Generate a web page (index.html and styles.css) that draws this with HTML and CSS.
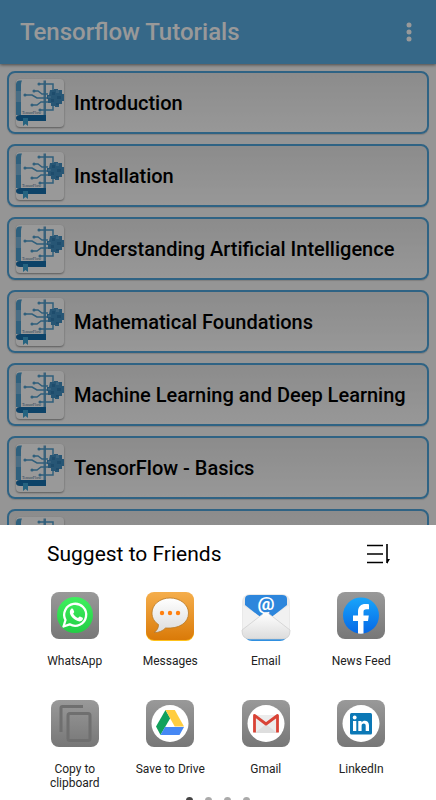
FILE: index.html
```
<!DOCTYPE html>
<html lang="en">
<head>
  <meta charset="UTF-8">
  <meta name="viewport" content="width=device-width, initial-scale=1">
  <title>Tensorflow Tutorials</title>
  <link rel="stylesheet" href="styles.css">
</head>
<body>

<!-- shared book icon, used by every chapter row -->
<svg class="defs" width="0" height="0" aria-hidden="true">
  <symbol id="book" viewBox="0 0 48 48">
    <path d="M5 2h24v34H5z" fill="#fff"/>
    <path d="M4 1.500h2Q5 3 5 6v30H0V5.500q0-4 4-4z" fill="#4fa0d0"/>
    <path d="M0 12h5v11H0z" fill="#7ab6dc"/>
    <path d="M4 36h26v6H4q-4 0-4-3t4-3z" fill="#1670ad"/>
    <path d="M7 39h5v8l-2.500-2L7 47z" fill="#3fa6d6"/>
    <path d="M27.500 1.500H30V36h-2.500z" fill="#62a3cd"/>
    <g fill="none" stroke="#509fce" stroke-width="1.500">
      <path d="M24 5h13v7M18 12h4l4 3h6M10 16h6l5 3h12M17 26h4l4-3h8M25 31h12v-5"/>
      <circle cx="23" cy="5" r=".8"/><circle cx="18" cy="12" r=".8"/><circle cx="9" cy="16" r=".8"/><circle cx="16" cy="26" r=".8"/><circle cx="24" cy="31" r=".8"/>
    </g>
    <path d="M34 11h4v-1h4v1h4v4h2v7h-2v3h-3v3h-4v-1h-4v-3h-3v-4h-1v-4h2z" fill="#4290c4"/>
    <path d="M36 13h3v3h-3zM41 17h4v3h-4zM35 20h3v3h-3zM40 24h3v2h-3z" fill="#327fb5"/>
    <path d="M40 11h3v3h-3zM32 17h3v2h-3z" fill="#5fa6d4"/>
  </symbol>
  <linearGradient id="tile" x2="0" y2="1"><stop stop-color="#999"/><stop offset="1" stop-color="#777"/></linearGradient>
  <linearGradient id="green" x2="0" y2="1"><stop stop-color="#3ff05e"/><stop offset="1" stop-color="#23cd45"/></linearGradient>
  <linearGradient id="orange" x2="0" y2="1"><stop stop-color="#f5ae4c"/><stop offset="1" stop-color="#da7a08"/></linearGradient>
  <linearGradient id="blue" x2="0" y2="1"><stop stop-color="#18a5fb"/><stop offset="1" stop-color="#0668e6"/></linearGradient>
  <linearGradient id="paper" x2="0" y2="1"><stop stop-color="#fff"/><stop offset="1" stop-color="#dcdcdc"/></linearGradient>
</svg>

<div class="app">
  <header class="topbar">
    <h1>Tensorflow Tutorials</h1>
    <button class="more" aria-label="More options">
      <svg width="6" height="20" viewBox="0 0 6 20"><circle cx="3" cy="3" r="2.500"/><circle cx="3" cy="10" r="2.500"/><circle cx="3" cy="17" r="2.500"/></svg>
    </button>
  </header>

  <nav class="chapters">
    <a class="chapter" href="#"><svg class="book"><use href="#book"/><text x="6" y="35">TensorFlow</text></svg>Introduction</a>
    <a class="chapter" href="#"><svg class="book"><use href="#book"/><text x="6" y="35">TensorFlow</text></svg>Installation</a>
    <a class="chapter" href="#"><svg class="book"><use href="#book"/><text x="6" y="35">TensorFlow</text></svg>Understanding Artificial Intelligence</a>
    <a class="chapter" href="#"><svg class="book"><use href="#book"/><text x="6" y="35">TensorFlow</text></svg>Mathematical Foundations</a>
    <a class="chapter" href="#"><svg class="book"><use href="#book"/><text x="6" y="35">TensorFlow</text></svg>Machine Learning and Deep Learning</a>
    <a class="chapter" href="#"><svg class="book"><use href="#book"/><text x="6" y="35">TensorFlow</text></svg>TensorFlow - Basics</a>
    <a class="chapter" href="#" aria-label="Next chapter"><svg class="book"><use href="#book"/></svg></a>
  </nav>
  <div class="scrim"></div>
</div>

<section class="sheet">
  <div class="sheet-head">
    <h2>Suggest to Friends</h2>
    <button class="sort" aria-label="Sort">
      <svg width="24" height="22" viewBox="0 0 24 22" fill="none" stroke="#000" stroke-width="1.600">
        <path d="M1 2.500h16M1 11h16M1 19.500h16M21 1v19"/><path d="M21 21v-5h3z" fill="#000" stroke="none"/>
      </svg>
    </button>
  </div>

  <div class="targets">
    <button class="target">
      <svg width="48" height="48" viewBox="0 0 48 48">
        <rect width="48" height="47" rx="8" fill="url(#tile)"/>
        <circle cx="24" cy="23" r="18" fill="url(#green)"/>
        <path d="M12.500 34.500l2-6.500a11 11 0 1 1 4.200 4.300z" fill="none" stroke="#fff" stroke-width="2.300" stroke-linejoin="round"/>
        <path d="M20 17c1-.8 2-.4 2.300.6l.9 2.200c.2.600-.8 1.600-1 2 1 2 2.600 3.300 4.800 4.200.6-.4 1.300-1.700 2-1.500l2.700 1.300c.7.500-.2 2.800-1.500 3.300-2.600 1-6-.8-8.300-3-2-2-4.600-5.600-1.900-9.100z" fill="#fff"/>
      </svg>
      WhatsApp
    </button>
    <button class="target">
      <svg width="48" height="48" viewBox="0 0 48 48">
        <rect y="1" width="48" height="48" rx="8" fill="#ffc21a"/>
        <rect width="48" height="48" rx="8" fill="url(#orange)"/>
        <path d="M24 6C14 6 6 12.500 6 21c0 5 2.500 9 6.500 11.500C12.500 36 11 38.500 8 40.500c5 .2 8.500-1.500 11.500-4.500C33 37 42.500 31 42.500 21 42.500 12.500 34 6 24 6z" fill="url(#paper)" stroke="#b97825" stroke-width=".8"/>
        <g fill="#ff7f0e"><circle cx="16" cy="21" r="2.200"/><circle cx="24" cy="21" r="2.200"/><circle cx="32" cy="21" r="2.200"/></g>
      </svg>
      Messages
    </button>
    <button class="target">
      <svg width="48" height="48" viewBox="0 0 48 48">
        <rect x="2" y="9" width="44" height="40" rx="8" fill="#2f8fe0"/>
        <rect y="2" width="48" height="45" rx="8" fill="#e9e9e9"/>
        <path d="M3 13V7q0-4 5-4h32q5 0 5 4v6L31 24H17z" fill="#2d86dc"/>
        <path d="M1 13.500L20 26H28L47 13.500V40q0 7-8 7H9q-8 0-8-7z" fill="#f1f1f1"/>
        <path d="M0 38L21.500 21.500q2.500-2 5 0L48 38v1q0 8-8 8H8q-8 0-8-8z" fill="url(#paper)" stroke="#ccc" stroke-width=".7"/>
        <text x="24" y="18" class="at-sign">@</text>
      </svg>
      Email
    </button>
    <button class="target">
      <svg width="48" height="48" viewBox="0 0 48 48">
        <rect width="48" height="47" rx="8" fill="url(#tile)"/>
        <circle cx="24" cy="23.500" r="18" fill="url(#blue)"/>
        <path d="M21 41.500V29h-5v-5.500h5V20c0-5.500 3-8 7.500-8 1.500 0 3 .2 3.500.3v5h-2.500c-2.300 0-3 1-3 2.700v3.500h5.300L31 29h-4.500v12.500q-2.500.3-5.500 0z" fill="#fff"/>
      </svg>
      News Feed
    </button>
    <button class="target">
      <svg width="48" height="48" viewBox="0 0 48 48">
        <rect width="48" height="47" rx="8" fill="url(#tile)"/>
        <g fill="none" stroke="#6f6f6f" stroke-width="3">
          <path d="M10 32V8q0-1.500 1.500-1.500H32"/>
          <rect x="17" y="13.500" width="22" height="27" rx="2"/>
        </g>
      </svg>
      Copy to clipboard
    </button>
    <button class="target">
      <svg width="48" height="48" viewBox="0 0 48 48">
        <rect width="48" height="47" rx="8" fill="url(#tile)"/>
        <circle cx="24" cy="23.500" r="18.500" fill="#fff"/>
        <path d="M19.500 10l4.700 8.200L14.500 35 10 26.500z" fill="#12a15c"/>
        <path d="M19.500 10h9.300L38 26.500h-9.300z" fill="#ffcd40"/>
        <path d="M19 27h19l-4.500 8h-19z" fill="#4688f4"/>
      </svg>
      Save to Drive
    </button>
    <button class="target">
      <svg width="48" height="48" viewBox="0 0 48 48">
        <rect width="48" height="47" rx="8" fill="url(#tile)"/>
        <circle cx="24" cy="23.500" r="18.500" fill="#fff"/>
        <path d="M12 15h24v18H12z" fill="#ececec"/>
        <path d="M13 33l11-9 11 9z" fill="#dedede"/>
        <path d="M12.500 32.500V15.500L24 24l11.500-8.500v17" fill="none" stroke="#d94336" stroke-width="2.800" stroke-linejoin="round"/>
      </svg>
      Gmail
    </button>
    <button class="target">
      <svg width="48" height="48" viewBox="0 0 48 48">
        <rect width="48" height="47" rx="8" fill="url(#tile)"/>
        <circle cx="24" cy="23.500" r="18.500" fill="#fff"/>
        <rect x="13" y="13" width="22" height="21.500" rx="1.500" fill="#0b78b6"/>
        <circle cx="17.700" cy="17.500" r="1.900" fill="#fff"/>
        <path d="M16 21h3.300v10H16zM21.300 21h3.200v1.500c1.800-3 7.500-2.500 7.500 2.800V31h-3.300v-5.200c0-3.200-4.100-2.800-4.100 0V31h-3.300z" fill="#fff"/>
      </svg>
      LinkedIn
    </button>
  </div>

  <div class="pager">
    <span class="dot active"></span>
    <span class="dot"></span>
    <span class="dot"></span>
    <span class="dot"></span>
  </div>
</section>

</body>
</html>
```
FILE: styles.css
```
* {
  box-sizing: border-box;
}

body {
  margin: 0;
  height: 100vh;
  display: flex;
  flex-direction: column;
  overflow: hidden;
  font-family: Roboto, sans-serif;
  background: #fff;
  color: #000;
}

button {
  padding: 0;
  border: none;
  background: none;
  font: inherit;
  color: inherit;
  cursor: pointer;
}

.defs {
  position: absolute;
}

.app {
  position: relative;
  flex: 1;
  min-height: 0;
  overflow: hidden;
  background: #f8f8f8;
}

.scrim {
  position: absolute;
  inset: 0;
  background: rgba(0, 0, 0, 0.4);
}

.topbar {
  display: flex;
  align-items: center;
  justify-content: space-between;
  height: 64px;
  padding: 0 24px 0 20px;
  background: #5aade3;
  box-shadow: 0 1px 3px rgba(0, 0, 0, 0.5);
  color: #fff;
}

.topbar h1 {
  margin: 0;
  font-size: 24px;
  font-weight: 500;
}

.more {
  display: flex;
  fill: #fff;
}

.chapters {
  display: flex;
  flex-direction: column;
  gap: 10px;
  padding: 7px;
}

.chapter {
  display: flex;
  align-items: center;
  gap: 10px;
  height: 63px;
  padding: 0 7px;
  border: 2px solid #4fa5dc;
  border-radius: 8px;
  background: linear-gradient(#e9e9e9, #fdfdfd);
  box-shadow: 0 1px 1px rgba(0, 0, 0, 0.15);
  color: #000;
  font-size: 20px;
  font-weight: 500;
  text-decoration: none;
}

.book {
  width: 48px;
  height: 48px;
  border-radius: 4px;
  background: #fff;
  box-shadow: 0 1px 2px rgba(0, 0, 0, 0.4);
}

.book text {
  font: 4px "Liberation Serif", serif;
  fill: #44708f;
}

.sheet {
  padding: 16px 27px 0;
  background: #fff;
}

.sheet-head {
  display: flex;
  align-items: center;
  justify-content: space-between;
  height: 26px;
  padding: 0 19px 0 20px;
}

.sheet-head h2 {
  margin: 0;
  font-size: 21px;
  font-weight: 400;
}

.sort {
  display: flex;
}

.targets {
  display: grid;
  grid-template-columns: repeat(4, minmax(0, 1fr));
  row-gap: 17px;
  margin-top: 25px;
}

.target {
  display: flex;
  flex-direction: column;
  align-items: center;
  gap: 14px;
  min-height: 91px;
  padding: 0 12px;
  color: #222;
  font-size: 12px;
  line-height: 14px;
}

.target svg {
  flex: none;
  overflow: visible;
}

.at-sign {
  font: bold 19px Roboto, sans-serif;
  fill: #fff;
  text-anchor: middle;
}

/* only the tops of the dots peek above the screen edge */
.pager {
  display: flex;
  justify-content: center;
  gap: 12px;
  margin: 6px 0 -4px;
}

.dot {
  width: 7px;
  height: 7px;
  border-radius: 50%;
  background: #aaa;
}

.dot.active {
  background: #444;
}
```
